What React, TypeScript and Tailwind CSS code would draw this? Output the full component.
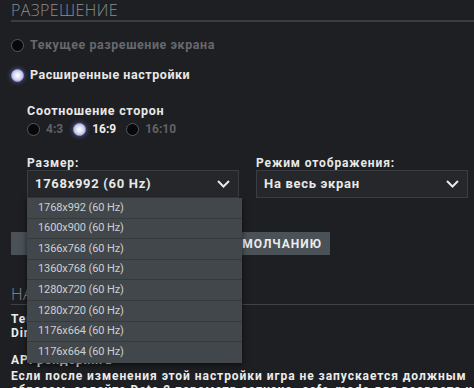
import { useState } from "react";

const RESOLUTIONS = [
  "1768x992 (60 Hz)",
  "1600x900 (60 Hz)",
  "1366x768 (60 Hz)",
  "1360x768 (60 Hz)",
  "1280x720 (60 Hz)",
  "1280x720 (60 Hz)",
  "1176x664 (60 Hz)",
  "1176x664 (60 Hz)",
];

function Radio({ checked }: { checked: boolean }) {
  return checked ? (
    <span className="w-[13px] h-[13px] shrink-0 rounded-full border border-[#a4aad4] bg-[radial-gradient(circle,#ffffff_0%,#e0e3f6_40%,#959cd0_100%)] shadow-[0_0_5px_#5d66c0]" />
  ) : (
    <span className="w-[13px] h-[13px] shrink-0 rounded-full border-[1.5px] border-[#55585d] bg-[#08080a]" />
  );
}

function Chevron() {
  return (
    <svg width="13" height="8" viewBox="0 0 13 8" fill="none">
      <path d="M1 1l5.5 5.5L12 1" stroke="#e8e8e8" strokeWidth="2" />
    </svg>
  );
}

function Select({ value, open }: { value: string; open?: boolean }) {
  return (
    <div className="relative w-[212px] h-[28px]">
      <div className="h-full flex items-center justify-between pl-[7px] pr-[8px] border border-[#3a3d41] bg-[#25272a] text-[13px] font-bold tracking-[0.7px] text-[#e8e8e8]">
        <span>{value}</span>
        <Chevron />
      </div>
      {open && (
        <ul className="absolute left-0 top-full w-[215px] z-10 bg-[#42474b] shadow-[0_2px_6px_rgba(0,0,0,0.6)]">
          {RESOLUTIONS.map((r, i) => (
            <li
              key={i}
              className="h-[20.6px] flex items-center pl-[11px] text-[11px] tracking-[-0.1px] font-normal text-[#cdd0d3] border-b border-[#363a3d] last:border-b-0"
            >
              {r}
            </li>
          ))}
        </ul>
      )}
    </div>
  );
}

export default function App() {
  const [aspect] = useState("16:9");

  return (
    <div className="w-[474px] h-[388px] overflow-hidden bg-[#1e1f22] pl-[11px] font-['Roboto',sans-serif]">
      <div className="h-[22px] border-b-2 border-[#3a3c40] font-['Open_Sans',sans-serif] text-[16px] leading-[20px] font-light tracking-[0.4px] text-[#8b8e92]">
        РАЗРЕШЕНИЕ
      </div>

      <div className="mt-[16px] h-[14px] flex items-center gap-[6px] text-[12.5px] font-bold tracking-[0.55px] text-[#66696d]">
        <Radio checked={false} />
        Текущее разрешение экрана
      </div>
      <div className="mt-[16px] h-[14px] flex items-center gap-[6px] text-[12.5px] font-bold tracking-[0.55px] text-[#e8e8e8]">
        <Radio checked />
        Расширенные настройки
      </div>

      <div className="pl-[16px]">
        <div className="mt-[21px] h-[16px] leading-[16px] text-[12.5px] font-bold tracking-[0.7px] text-[#e8e8e8]">
          Соотношение сторон
        </div>
        <div className="mt-[3px] h-[14px] flex items-center text-[12px] font-bold">
          {["4:3", "16:9", "16:10"].map((a) => (
            <div key={a} className="flex items-center gap-[6px] mr-[10px]">
              <Radio checked={a === aspect} />
              <span className={a === aspect ? "text-[#ececec]" : "text-[#5f6266]"}>{a}</span>
            </div>
          ))}
        </div>

        <div className="mt-[20px] flex gap-[17px]">
          <div>
            <div className="h-[14px] leading-[14px] text-[12px] font-bold tracking-[0.9px] text-[#e8e8e8]">
              Размер:
            </div>
            <Select value="1768x992 (60 Hz)" open />
          </div>
          <div>
            <div className="h-[14px] leading-[14px] text-[12px] font-bold tracking-[0.9px] text-[#e8e8e8]">
              Режим отображения:
            </div>
            <Select value="На весь экран" />
          </div>
        </div>
      </div>

      <button className="mt-[34px] w-[319px] h-[23px] flex items-center justify-end pr-[8px] bg-[#4a5157] text-[12px] font-bold tracking-[1px] text-[#ececec]">
        СБРОСИТЬ ПО УМОЛЧАНИЮ
      </button>

      <div className="mt-[29px] h-[21px] border-b border-[#404246] font-['Open_Sans',sans-serif] text-[16px] leading-[20px] font-light tracking-[0.4px] text-[#8b8e92]">
        НАСТРОЙКИ РЕНДЕРИНГА
      </div>

      <div className="mt-[7px] text-[12px] leading-[14px] font-bold tracking-[0.95px] text-[#ececec]">
        <p>Текущий API рендеринга:</p>
        <p>DirectX 11</p>
        <p className="mt-[13px]">API рендеринга</p>
        <p className="mt-[2px]">
          Если после изменения этой настройки игра не запускается должным образом, задайте Dota 2
          параметр запуска -safe_mode для возврата к стандартному значению.
        </p>
      </div>
    </div>
  );
}
